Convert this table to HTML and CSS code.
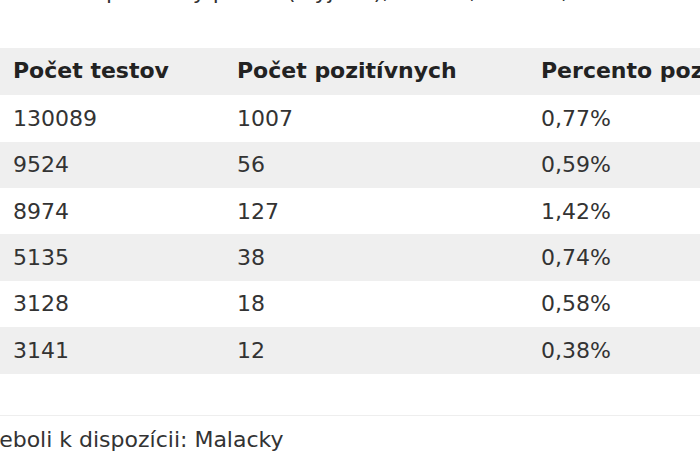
FILE: index.html
```html
<!DOCTYPE html>
<html lang="sk">
<head>
<meta charset="utf-8">
<link rel="stylesheet" href="styles.css">
</head>
<body>
<div class="page">
  <p class="intro">Celkové pozitívny podiel (Myjava), Senica, Skalica, Senec</p>
  <table class="results">
    <colgroup>
      <col class="c1"><col class="c2"><col class="c3">
    </colgroup>
    <thead>
      <tr><th>Počet testov</th><th>Počet pozitívnych</th><th>Percento pozitívnych</th></tr>
    </thead>
    <tbody>
      <tr><td>130089</td><td>1007</td><td>0,77%</td></tr>
      <tr><td>9524</td><td>56</td><td>0,59%</td></tr>
      <tr><td>8974</td><td>127</td><td>1,42%</td></tr>
      <tr><td>5135</td><td>38</td><td>0,74%</td></tr>
      <tr><td>3128</td><td>18</td><td>0,58%</td></tr>
      <tr><td>3141</td><td>12</td><td>0,38%</td></tr>
    </tbody>
  </table>
  <p class="note">Údaje neboli k dispozícii: Malacky</p>
</div>
</body>
</html>
```
FILE: styles.css
```css
html, body {
  margin: 0;
  padding: 0;
  overflow: hidden;
  background: #ffffff;
}
.page {
  width: 900px;
  font-family: "DejaVu Sans", Verdana, sans-serif;
  font-size: 22px;
  color: #333333;
}
.intro {
  margin: -20.6px 0 0 12px;
  line-height: 26px;
  white-space: nowrap;
}
.results {
  margin-top: 42.4px;
  border-collapse: collapse;
  table-layout: fixed;
  width: 800px;
}
.c1 { width: 224px; }
.c2 { width: 304px; }
.c3 { width: 272px; }
.results th,
.results td {
  text-align: left;
  padding: 10.5px 0 9.5px 13px;
  line-height: 26.4px;
  white-space: nowrap;
  overflow: hidden;
}
.results th {
  font-weight: bold;
  color: #222222;
  background: #efefef;
  padding-top: 10.5px;
  padding-bottom: 10.5px;
}
.results tbody tr:nth-child(even) td {
  background: #efefef;
}
.note {
  margin: 41px 0 0 -85px;
  padding-top: 11px;
  border-top: 1px solid #eeeeee;
  line-height: 26px;
  white-space: nowrap;
}
```
